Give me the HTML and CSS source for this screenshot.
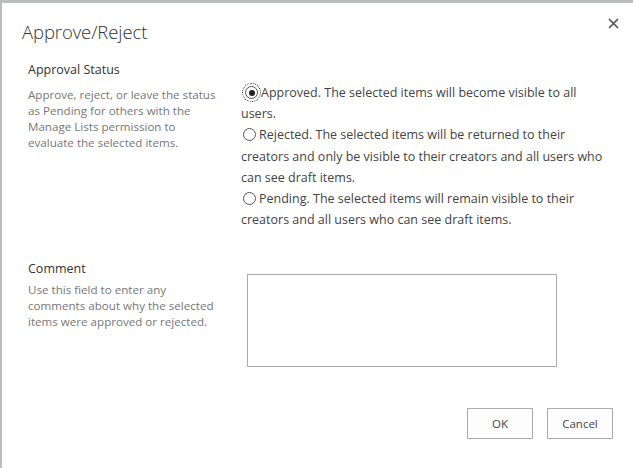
FILE: index.html
```html
<!DOCTYPE html>
<html lang="en">
<head>
  <meta charset="UTF-8" />
  <title>Approve/Reject</title>
  <link rel="stylesheet" href="styles.css">
</head>
<body>
  <div class="dialog">
    <div class="header">
      <h1>Approve/Reject</h1>
      <button class="close" aria-label="Close">
        <svg width="11" height="11" viewBox="0 0 11 11"><path d="M1 1L10 10M10 1L1 10" stroke="#555" stroke-width="1.7"/></svg>
      </button>
    </div>

    <div class="section status">
      <div class="info">
        <h2>Approval Status</h2>
        <p>Approve, reject, or leave the status as Pending for others with the Manage Lists permission to evaluate the selected items.</p>
      </div>
      <div class="options">
        <label class="option"><span class="radio checked focus"><span class="dot"></span></span>Approved. The selected items will become visible to all users.</label>
        <label class="option"><span class="radio"></span>Rejected. The selected items will be returned to their creators and only be visible to their creators and all users who can see draft items.</label>
        <label class="option"><span class="radio"></span>Pending. The selected items will remain visible to their creators and all users who can see draft items.</label>
      </div>
    </div>

    <div class="section comment">
      <div class="info">
        <h2>Comment</h2>
        <p>Use this field to enter any comments about why the selected items were approved or rejected.</p>
      </div>
      <div class="field">
        <textarea></textarea>
      </div>
    </div>

    <div class="actions">
      <button class="btn">OK</button>
      <button class="btn">Cancel</button>
    </div>
  </div>
</body>
</html>
```

FILE: styles.css
```css
html, body { margin: 0; height: 100%; }
body { background: #b9bdbd; font-family: "Open Sans", "Noto Sans", sans-serif; color: #444; padding: 3px 0 0 2px; box-sizing: border-box; }
.dialog { background: #fff; height: 100%; box-sizing: border-box; padding: 0 0 0 20px; }
.header { display: flex; justify-content: space-between; align-items: flex-start; height: 58px; }
h1 { margin: 16px 0 0; font-size: 18.5px; font-weight: 300; color: #333; letter-spacing: -0.1px; }
.close { background: none; border: 0; padding: 0; margin: 14px 14px 0 0; width: 11px; height: 11px; }
.section { display: grid; grid-template-columns: 213px 1fr; padding-left: 6px; }
.info h2 { margin: 0; font-size: 12.5px; font-weight: 400; color: #333; }
.info p { margin: 5px 0 0; max-width: 190px; font-size: 11.6px; line-height: 16px; color: #777; }
.status .info p { margin-top: 9px; }
.options { padding-top: 21px; font-size: 12.5px; color: #444; width: 362px; }
.option { display: block; line-height: 21.2px; }
.radio { display: inline-block; width: 13px; height: 13px; border: 1px solid #555; border-radius: 50%; box-sizing: border-box; vertical-align: -2px; margin: 0 3px 0 2px; position: relative; }
.radio.focus { outline: 1px dotted #333; outline-offset: 2px; margin-left: 4px; margin-right: 3px; }
.dot { position: absolute; left: 2.5px; top: 2.5px; width: 6px; height: 6px; border-radius: 50%; background: #222; }
.comment { margin-top: 30px; }
.field { padding-top: 14px; }
textarea { display: block; width: 310px; height: 93px; border: 1px solid #ababab; box-sizing: border-box; margin-left: 6px; resize: none; }
.actions { display: flex; justify-content: flex-end; gap: 14px; padding: 41px 20px 0 0; }
.btn { width: 66px; height: 31px; background: #fdfdfd; border: 1px solid #ababab; font-family: inherit; font-size: 11.5px; color: #444; }
```
